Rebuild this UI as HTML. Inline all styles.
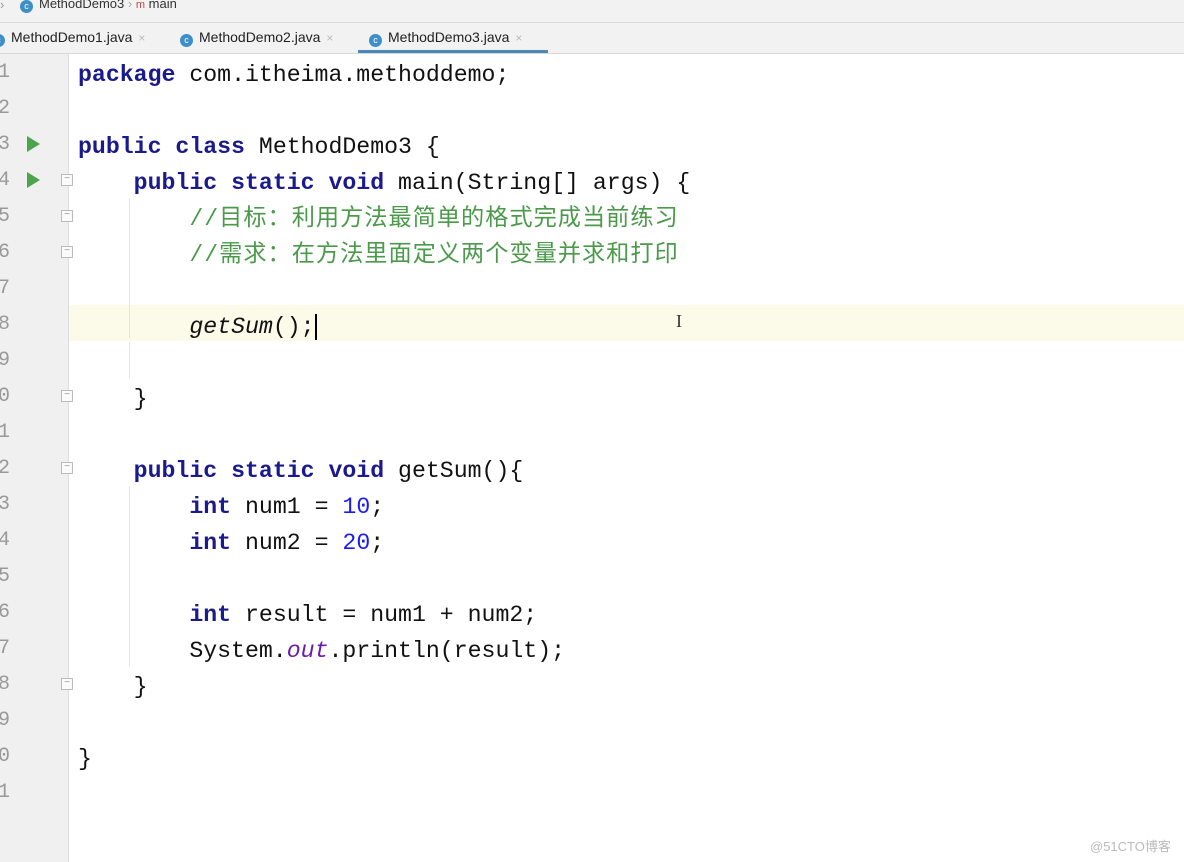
<!DOCTYPE html>
<html><head><meta charset="utf-8"><style>
body{margin:0;width:1184px;height:862px;overflow:hidden;background:#fff;position:relative;font-family:"Liberation Sans",sans-serif}
.crumb{position:absolute;left:0;top:0;width:1184px;height:22px;background:#f2f2f2;border-bottom:1px solid #ddd;font-size:13px;color:#333}
.tabs{position:absolute;left:0;top:23px;width:1184px;height:30px;background:#f2f2f2;border-bottom:1px solid #d8d8d8;font-size:14px;color:#222}
.tab{position:absolute;top:6px;white-space:nowrap}
.ic{display:inline-block;width:13px;height:13px;border-radius:50%;background:#3e8fc7;color:#fff;font-size:9px;text-align:center;line-height:13px;vertical-align:-1px;margin-right:6px}
.x{color:#bbb;margin-left:6px;font-size:12px}
.gut{position:absolute;left:0;top:54px;width:68px;height:808px;background:#f0f0f0;border-right:1px solid #ddd}
.hl{position:absolute;left:69px;top:305px;width:1115px;height:36px;background:#fcfae8}
.ln{position:absolute;left:-2px;font:20px "Liberation Mono",monospace;color:#999}
.code{position:absolute;left:78px;font:23.2px "Liberation Mono","Noto Sans CJK SC",monospace;color:#111;white-space:pre;line-height:36px}
.l{height:36px}
.k{color:#1a1a8c;font-weight:bold}
.c{color:#4a9a4a;font-family:"Liberation Mono","Noto Sans CJK SC",monospace;font-size:23.2px;letter-spacing:1px}
.n{color:#1a1aff}
.i{font-style:italic}
.o{color:#6b1fa8;font-style:italic}
.run{position:absolute;left:27px;width:0;height:0;border-left:13px solid #4ca44c;border-top:8px solid transparent;border-bottom:8px solid transparent}
.fold{position:absolute;left:61px;width:12px;height:12px;border:1px solid #bbb;background:#fafafa;box-sizing:border-box;font-size:10px;line-height:8px;text-align:center;color:#999}
.guide{position:absolute;left:129px;width:1px;background:#e4e4e4}
.wm{position:absolute;left:1090px;top:836px;font-size:13px;color:#bbb}
</style></head><body>
<div class="crumb"><span style="position:absolute;left:0;top:-3px;color:#999">›</span><span style="position:absolute;left:20px;top:-4px"><span class="ic">c</span>MethodDemo3 <span style="color:#aaa">›</span> <span style="color:#c44;font-size:11px">m</span> main</span></div>
<div class="tabs">
<span class="tab" style="left:-8px"><span class="ic">c</span>MethodDemo1.java<span class="x">×</span></span>
<span class="tab" style="left:180px"><span class="ic">c</span>MethodDemo2.java<span class="x">×</span></span>
<span class="tab" style="left:369px"><span class="ic">c</span>MethodDemo3.java<span class="x">×</span></span>
<div style="position:absolute;left:358px;top:27px;width:190px;height:3px;background:#4a88b8"></div>
</div>
<div class="gut"></div>
<div class="hl"></div>
<div class="guide" style="top:198px;height:140px"></div>
<div class="guide" style="top:342px;height:36px"></div>
<div class="guide" style="top:486px;height:180px"></div>
<div class="run" style="top:136px"></div>
<div class="run" style="top:172px"></div>
<div class="fold" style="top:174px">−</div>
<div class="fold" style="top:210px">−</div>
<div class="fold" style="top:246px">−</div>
<div class="fold" style="top:390px">−</div>
<div class="fold" style="top:462px">−</div>
<div class="fold" style="top:678px">−</div>
<div class="ln" style="top:61px">1</div><div class="ln" style="top:97px">2</div><div class="ln" style="top:133px">3</div><div class="ln" style="top:169px">4</div><div class="ln" style="top:205px">5</div><div class="ln" style="top:241px">6</div><div class="ln" style="top:277px">7</div><div class="ln" style="top:313px">8</div><div class="ln" style="top:349px">9</div><div class="ln" style="top:385px">0</div><div class="ln" style="top:421px">1</div><div class="ln" style="top:457px">2</div><div class="ln" style="top:493px">3</div><div class="ln" style="top:529px">4</div><div class="ln" style="top:565px">5</div><div class="ln" style="top:601px">6</div><div class="ln" style="top:637px">7</div><div class="ln" style="top:673px">8</div><div class="ln" style="top:709px">9</div><div class="ln" style="top:745px">0</div><div class="ln" style="top:781px">1</div>
<div class="code" style="top:57px"><span class="k">package</span> com.itheima.methoddemo;

<span class="k">public class</span> MethodDemo3 {
    <span class="k">public static void</span> main(String[] args) {
        <span class="c">//目标：利用方法最简单的格式完成当前练习</span>
        <span class="c">//需求：在方法里面定义两个变量并求和打印</span>

        <span class="i">getSum</span>();<span style="border-left:2px solid #000"></span>

    }

    <span class="k">public static void</span> getSum(){
        <span class="k">int</span> num1 = <span class="n">10</span>;
        <span class="k">int</span> num2 = <span class="n">20</span>;

        <span class="k">int</span> result = num1 + num2;
        System.<span class="o">out</span>.println(result);
    }

}
</div>
<div style="position:absolute;left:676px;top:311px;font:18px 'Liberation Serif';color:#333">I</div>
<div class="wm">@51CTO博客</div>
</body></html>
